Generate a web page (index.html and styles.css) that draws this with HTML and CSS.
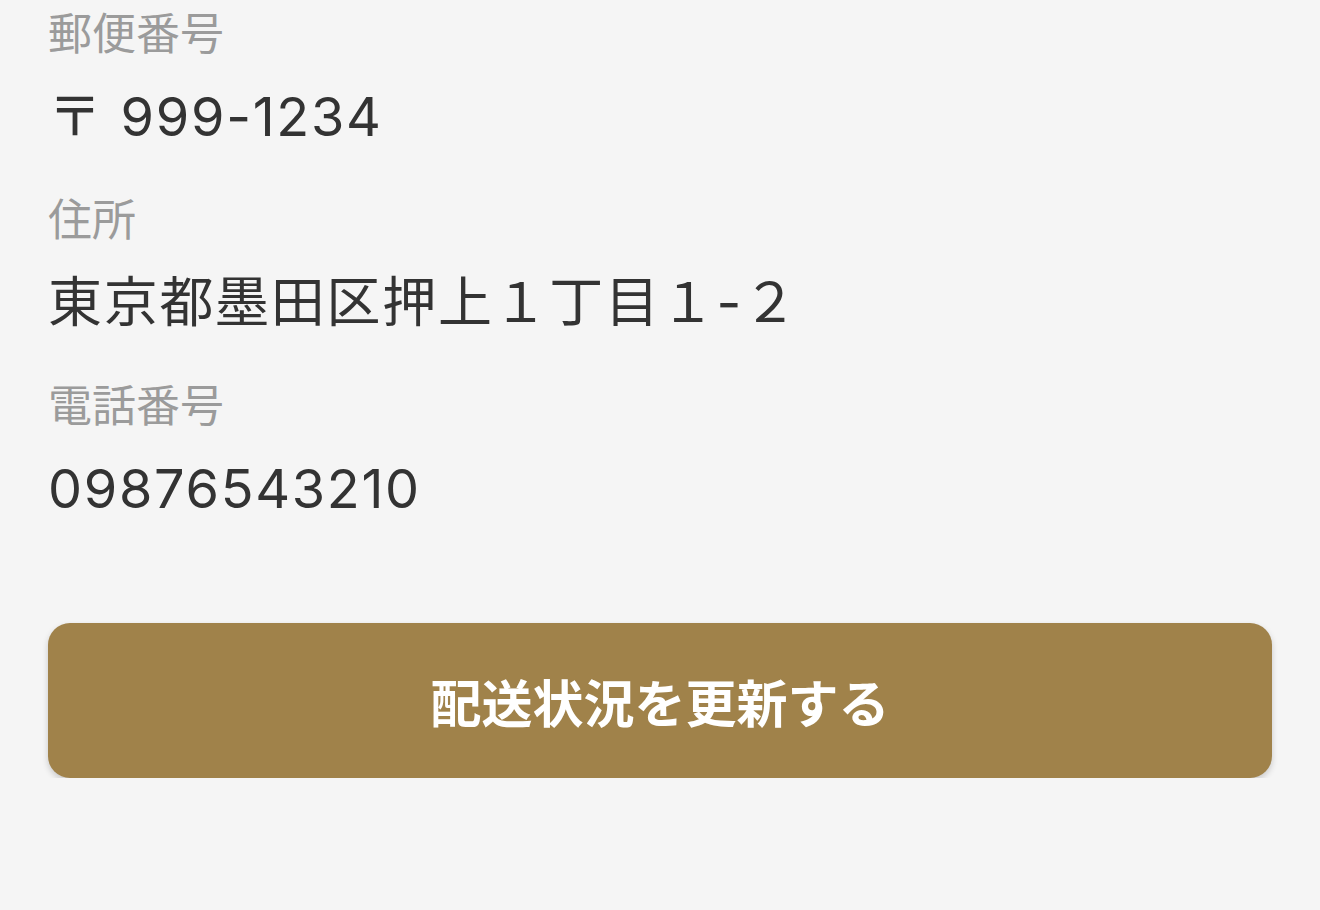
FILE: index.html
```html
<!DOCTYPE html>
<html lang="ja">
<head>
<meta charset="utf-8">
<title>配送情報</title>
<link rel="stylesheet" href="styles.css">
</head>
<body>
<main class="page">
  <section class="fields">
    <div class="field">
      <div class="label">郵便番号</div>
      <div class="value">〒 999-1234</div>
    </div>
    <div class="field">
      <div class="label">住所</div>
      <div class="value">東京都墨田区押上１丁目１-２</div>
    </div>
    <div class="field">
      <div class="label">電話番号</div>
      <div class="value">09876543210</div>
    </div>
  </section>
  <button class="update-btn" type="button">配送状況を更新する</button>
</main>
</body>
</html>
```

FILE: styles.css
```css
html, body {
  margin: 0;
  padding: 0;
  background: #f5f5f5;
}

body {
  font-family: Inter, "Noto Sans CJK JP", sans-serif;
  color: #333333;
}

.page {
  padding: 0 48px;
  display: flex;
  flex-direction: column;
}

.fields {
  display: flex;
  flex-direction: column;
}

.field {
  display: flex;
  flex-direction: column;
  padding-bottom: 37px;
}

.label {
  font-family: "Noto Sans CJK JP", sans-serif;
  font-size: 44px;
  line-height: 62px;
  color: #9b9b9b;
}

.value {
  font-size: 54px;
  line-height: 64px;
  margin-top: 23px;
  letter-spacing: 1.7px;
  color: #333333;
}

.update-btn {
  margin-top: 65px;
  height: 155px;
  width: 100%;
  border: none;
  border-radius: 22px;
  background: #a0824a;
  color: #ffffff;
  font-family: "Noto Sans CJK JP", sans-serif;
  font-size: 51px;
  font-weight: 700;
  box-shadow: 0 3px 6px rgba(0, 0, 0, 0.18);
  cursor: pointer;
}
```
